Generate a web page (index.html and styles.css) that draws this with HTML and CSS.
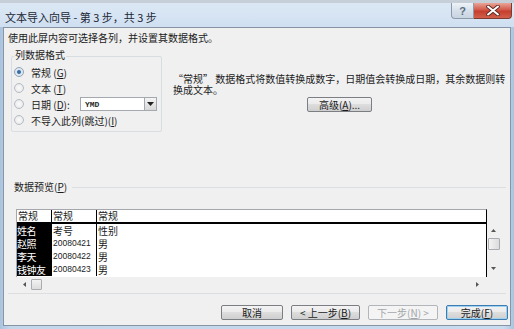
FILE: index.html
```html
<!DOCTYPE html>
<html lang="zh-CN">
<head>
<meta charset="utf-8">
<title>文本导入向导</title>
<link rel="stylesheet" href="styles.css">
</head>
<body>
<div class="window">
  <div class="titlebar">
    <span class="title">文本导入向导 - 第 3 步，共 3 步</span>
    <div class="caption">
      <div class="cap-btn help">?</div>
      <div class="cap-btn close">
        <svg width="14" height="11" viewBox="0 0 14 11"><path d="M2 1.5 L12 9.5 M12 1.5 L2 9.5" stroke="#5a2620" stroke-width="3.6" stroke-linecap="round"/><path d="M2 1.5 L12 9.5 M12 1.5 L2 9.5" stroke="#fff" stroke-width="2" stroke-linecap="round"/></svg>
      </div>
    </div>
  </div>
  <div class="client">
    <p class="intro">使用此屏内容可选择各列，并设置其数据格式。</p>
    <div class="upper">
      <div class="group">
        <div class="group-label">列数据格式</div>
        <div class="radio"><span class="dot checked"></span>常规 (<u>G</u>)</div>
        <div class="radio"><span class="dot"></span>文本 (<u>T</u>)</div>
        <div class="radio"><span class="dot"></span>日期 (<u>D</u>):
          <div class="select"><span class="sel-text">YMD</span><span class="sel-btn"><svg width="7" height="4" viewBox="0 0 7 4"><polygon points="0,0 7,0 3.5,4" fill="#222"/></svg></span></div>
        </div>
        <div class="radio"><span class="dot"></span>不导入此列(跳过)(<u>I</u>)</div>
      </div>
      <div class="desc">
        <p class="desc-text">“常规” 数据格式将数值转换成数字，日期值会转换成日期，其余数据则转<br>换成文本。</p>
        <button class="btn adv">高级(<u>A</u>)...</button>
      </div>
    </div>
    <div class="preview-head"><span>数据预览(<u>P</u>)</span><span class="rule"></span></div>
    <div class="preview">
      <div class="preview-top">
        <div class="data">
          <div class="row head">
            <span class="cell c1">常规</span><span class="cell c2">常规</span><span class="cell c3">常规</span>
          </div>
          <div class="body">
            <span class="cell b1">姓名</span><span class="cell b2">考号</span><span class="cell b3">性别</span>
            <span class="cell b1">赵照</span><span class="cell b2 num">20080421</span><span class="cell b3">男</span>
            <span class="cell b1">李天</span><span class="cell b2 num">20080422</span><span class="cell b3">男</span>
            <span class="cell b1">钱钟友</span><span class="cell b2 num">20080423</span><span class="cell b3">男</span>
          </div>
        </div>
        <div class="vscroll">
          <svg class="arr" width="5" height="3" viewBox="0 0 5 3"><polygon points="2.5,0 5,3 0,3" fill="#555"/></svg>
          <div class="vthumb"></div>
          <svg class="arr down" width="5" height="3" viewBox="0 0 5 3"><polygon points="0,0 5,0 2.5,3" fill="#555"/></svg>
        </div>
      </div>
      <div class="hscroll">
        <svg class="harr" width="3" height="5" viewBox="0 0 3 5"><polygon points="3,0 3,5 0,2.5" fill="#555"/></svg>
        <div class="hthumb"></div>
        <svg class="harr right" width="3" height="5" viewBox="0 0 3 5"><polygon points="0,0 3,2.5 0,5" fill="#555"/></svg>
      </div>
    </div>
    <div class="sep"></div>
    <div class="buttons">
      <button class="btn cancel">取消</button>
      <button class="btn prev">&lt; 上一步(<u>B</u>)</button>
      <button class="btn next" disabled>下一步(<u>N</u>) &gt;</button>
      <button class="btn finish">完成(<u>F</u>)</button>
    </div>
  </div>
</div>
</body>
</html>
```

FILE: styles.css
```css
html, body {
  margin: 0;
  padding: 0;
}

body {
  width: 514px;
  height: 329px;
  overflow: hidden;
  font-family: "Noto Sans CJK SC", "Liberation Sans", sans-serif;
  font-size: 10px;
  color: #1b1b1b;
}

p {
  margin: 0;
}

u {
  text-decoration: underline;
  text-underline-offset: 1px;
}

.window {
  width: 514px;
  height: 329px;
  box-sizing: border-box;
  padding: 0 3px 3px;
  display: flex;
  flex-direction: column;
  background: linear-gradient(90deg, #aac4df, #c3d6ea 2%, #c9dbee 98%, #aac4df);
}

.titlebar {
  height: 27px;
  flex: none;
  margin: 0 -3px;
  display: flex;
  align-items: flex-start;
  background: linear-gradient(#c6cfd8 0, #c6cfd8 3px, #dbe7f4 3px, #d6e4f3 60%, #cfdff1 100%);
}

.title {
  margin: 11px 0 0 5px;
  font-size: 11px;
  line-height: 12px;
  white-space: nowrap;
  color: #1c2733;
}

.caption {
  margin: 3px 2px 0 auto;
  display: flex;
}

.cap-btn {
  height: 16px;
  box-sizing: border-box;
  display: flex;
  align-items: center;
  justify-content: center;
}

.help {
  width: 23px;
  border: 1px solid #8d9aa8;
  border-top: none;
  border-radius: 0 0 0 4px;
  background: linear-gradient(#eef3f8, #d6e0ea 50%, #c8d4e1);
  color: #5c6d80;
  font-family: "Liberation Sans", sans-serif;
  font-size: 11px;
  font-weight: bold;
}

.close {
  width: 38px;
  border: 1px solid #7d3a31;
  border-top: none;
  border-left: none;
  border-radius: 0 0 4px 0;
  background: linear-gradient(#e9a597, #d3594a 45%, #c53e2e 55%, #d2604b);
}

.client {
  flex: 1;
  background: #f0f0f0;
  border: 1px solid #8595a6;
  display: flex;
  flex-direction: column;
}

.intro {
  margin: 4px 0 0 4px;
  line-height: 12px;
}

.upper {
  margin-top: 3px;
  display: flex;
  align-items: flex-start;
}

.group {
  margin: 9px 0 0 7px;
  width: 151px;
  box-sizing: border-box;
  border: 1px solid #d8dde2;
  border-radius: 2px;
  padding-bottom: 3px;
}

.group-label {
  margin: -8px 0 0 2px;
  padding: 0 1px;
  width: fit-content;
  line-height: 12px;
  background: #f0f0f0;
}

.group-label + .radio {
  margin-top: 3px;
}

.radio {
  height: 16px;
  display: flex;
  align-items: center;
  white-space: nowrap;
}

.dot {
  width: 10px;
  height: 10px;
  box-sizing: border-box;
  margin: 0 7px 0 2px;
  border-radius: 50%;
  border: 1px solid #b6bcc2;
  background: radial-gradient(circle, #f6f6f6 30%, #dcdfe2 100%);
  flex: none;
}

.dot.checked {
  border-color: #8fa3b8;
  background: radial-gradient(circle, #2c5f92 0, #4b82b8 32%, #dbe4ee 40%, #e8edf2 100%);
}

.select {
  margin: 0 4px 0 auto;
  width: 77px;
  height: 14px;
  box-sizing: border-box;
  border: 1px solid #a3a9af;
  background: #fff;
  display: flex;
  align-items: center;
}

.sel-text {
  flex: 1;
  padding-left: 4px;
  font-family: "Liberation Mono", monospace;
  font-weight: bold;
  font-size: 8px;
  color: #2a2a2a;
}

.sel-btn {
  width: 12px;
  height: 12px;
  box-sizing: border-box;
  border-left: 1px solid #a3a9af;
  background: linear-gradient(#f4f4f4, #d8d8d8);
  display: flex;
  align-items: center;
  justify-content: center;
}

.desc {
  margin: 26px 0 0 11px;
  display: flex;
  flex-direction: column;
  align-items: flex-start;
}

.desc-text {
  line-height: 11px;
  white-space: nowrap;
}

.btn {
  font-family: "Noto Sans CJK SC", "Liberation Sans", sans-serif;
  font-size: 10px;
  line-height: 13px;
  height: 15px;
  padding: 0;
  box-sizing: border-box;
  border: 1px solid #7b7f84;
  border-radius: 2px;
  background: linear-gradient(#f3f3f3, #ebebeb 45%, #dddddd 50%, #cfcfcf);
  color: #1b1b1b;
  white-space: nowrap;
}

.adv {
  margin: 2px 0 0 134px;
  width: 65px;
}

.preview-head {
  margin: 49px 4px 0 10px;
  display: flex;
  align-items: center;
  line-height: 12px;
}

.rule {
  flex: 1;
  height: 1px;
  margin-left: 5px;
  background: #dcdfe2;
}

.preview {
  margin: 16px 9px 0 12px;
  display: flex;
  flex-direction: column;
}

.preview-top {
  display: flex;
  align-items: flex-start;
}

.data {
  width: 471px;
  height: 68px;
  box-sizing: border-box;
  border-top: 1px solid #a4a8ac;
  border-left: 1px solid #a4a8ac;
  border-right: 1px solid #000;
  background: #fff;
}

.row.head {
  display: grid;
  grid-template-columns: 35px 45px 1fr;
  height: 14px;
  box-sizing: border-box;
  border-bottom: 2px solid #000;
}

.cell {
  line-height: 12px;
  padding-left: 1px;
  white-space: nowrap;
}

.c1, .c2 {
  border-right: 1px solid #000;
}

.body {
  display: grid;
  grid-template-columns: 35px 45px 1fr;
  grid-auto-rows: 13px;
}

.body .cell {
  line-height: 13px;
}

.b1 {
  background: #000;
  color: #fff;
  padding-left: 0;
  letter-spacing: -0.5px;
  overflow: hidden;
}

.b2 {
  border-right: 1px solid #000;
}

.num {
  font-family: "Liberation Sans", sans-serif;
  font-size: 8.5px;
}

.vscroll {
  margin-top: 15px;
  width: 13px;
  height: 53px;
  display: flex;
  flex-direction: column;
  align-items: center;
}

.arr {
  margin-top: 5px;
  flex: none;
}

.vthumb {
  margin: 6px 0 0 1px;
  width: 12px;
  height: 12px;
  box-sizing: border-box;
  border: 1px solid #a9adb1;
  border-radius: 1px;
  background: linear-gradient(90deg, #f3f3f3, #dcdcdc);
}

.arr.down {
  margin-top: 17px;
}

.hscroll {
  width: 470px;
  height: 14px;
  display: flex;
  align-items: center;
}

.harr {
  margin-left: 7px;
  flex: none;
}

.hthumb {
  margin-left: 5px;
  width: 11px;
  height: 11px;
  box-sizing: border-box;
  border: 1px solid #a9adb1;
  border-radius: 1px;
  background: linear-gradient(#f3f3f3, #dcdcdc);
}

.harr.right {
  margin-left: auto;
  margin-right: 7px;
}

.sep {
  margin: 2px 4px 0 4px;
  height: 1px;
  background: #dcdfe2;
}

.buttons {
  margin: 11px 2px 0 0;
  display: flex;
  justify-content: flex-end;
  gap: 8px;
}

.cancel {
  width: 62px;
}

.prev {
  width: 69px;
}

.next {
  width: 70px;
  color: #a2a6aa;
  border-color: #b2b6ba;
  background: #f4f4f4;
}

.finish {
  width: 62px;
  border-color: #3d7cb0;
  box-shadow: inset 0 0 0 1px #9fd2f0;
}
```
